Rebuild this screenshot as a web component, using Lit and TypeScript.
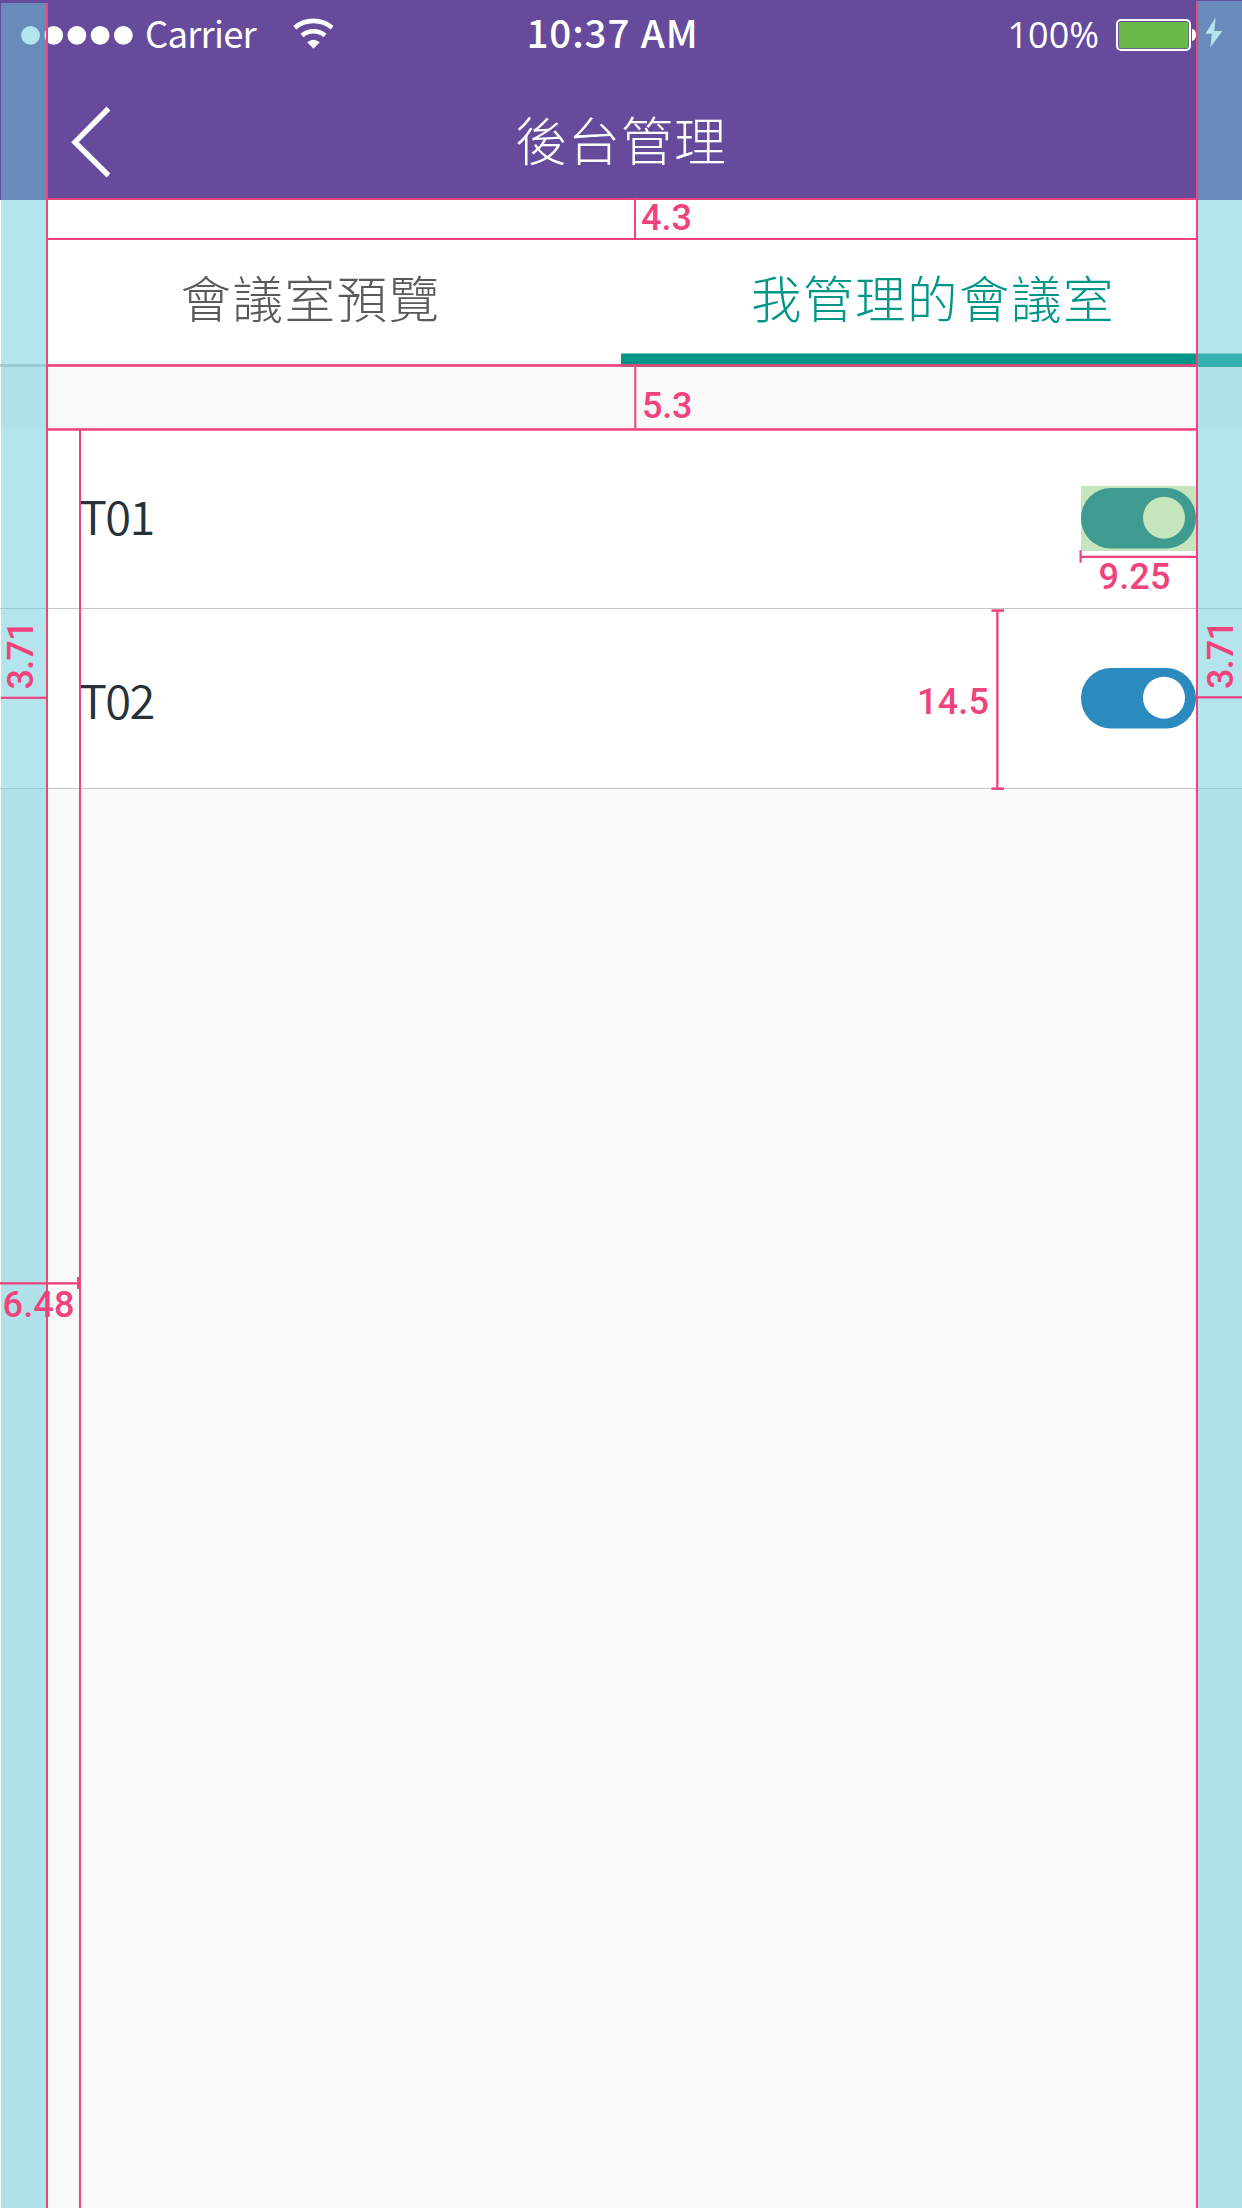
import { LitElement, html, svg, css } from "lit";
import { customElement } from "lit/decorators.js";

interface Room { name: string; measured: boolean; }

const rooms: Room[] = [
  { name: "T01", measured: true },
  { name: "T02", measured: false },
];

// Redline bars: x, y, width, height
const bars: [number, number, number, number][] = [
  [46, 3, 2, 2205],
  [1196, 1, 2, 2207],
  [79, 430, 2, 1778],
  [48, 198, 1148, 2],
  [48, 238, 1148, 2],
  [48, 364.2, 1148, 2.5],
  [48, 428.2, 1149, 2.5],
  [634, 197.5, 2, 41],
  [634.3, 363.5, 2, 65],
  [1079.5, 550.2, 2.2, 12.5],
  [1081, 555.7, 115, 2.3],
  [996.2, 610, 2.3, 179],
  [991.5, 609.3, 12.5, 2.5],
  [991.5, 787.4, 12.5, 2.5],
  [1, 696.7, 45, 2.2],
  [1198, 696.2, 44, 2.2],
  [0, 1282.2, 78, 2.3],
  [77, 1277, 2.2, 12],
];

// Redline labels: text, x, baseline y, drawn length, rotated
const labels: [string, number, number, number, boolean][] = [
  ["4.3", 641, 229.5, 51, false],
  ["5.3", 642, 417.7, 50.5, false],
  ["9.25", 1098.5, 588.7, 72, false],
  ["14.5", 917, 713.5, 72, false],
  ["6.48", 2.5, 1316.8, 72, false],
  ["3.71", 33.2, 689.5, 69, true],
  ["3.71", 1232.6, 689, 69, true],
];

@customElement("app-root")
export class AppRoot extends LitElement {
  static styles = css`
    :host {
      display: block;
      position: relative;
      width: 1242px;
      height: 2208px;
      overflow: hidden;
      background: #f9f9f9;
      font-family: "Noto Sans CJK TC", "Noto Sans", sans-serif;
    }
    .top { height: 200px; background: #664a9c; color: #fff; display: flex; flex-direction: column; }
    .status { height: 69px; display: grid; grid-template-columns: 1fr auto 1fr; align-items: center; }
    .left, .right { display: flex; align-items: center; }
    .left { padding-left: 21px; }
    .right { justify-content: flex-end; padding-right: 19px; }
    .dots { width: 113px; height: 20px; flex: none; }
    .carrier { font-size: 36.5px; line-height: 50px; letter-spacing: -0.8px; margin: 0 0 3px 11px; width: 148px; white-space: nowrap; }
    .wifi { width: 40px; height: 32px; flex: none; margin-bottom: 2px; }
    .time { font-size: 38.5px; line-height: 50px; font-weight: 500; letter-spacing: 0.9px; word-spacing: 1px; white-space: pre; margin: 0 17px 7px 0; }
    .pct { font-family: "Open Sans", "Noto Sans", sans-serif; font-size: 36px; line-height: 50px; letter-spacing: 0; margin-right: 16px; }
    .battery { width: 108px; height: 34px; flex: none; }
    .nav { flex: 1; display: grid; grid-template-columns: 121px 1fr 121px; align-items: center; }
    .back { width: 50px; height: 76px; margin: 15px 0 0 65px; }
    .title { text-align: center; font-size: 52px; line-height: 70px; font-weight: 300; letter-spacing: 0.9px; margin-top: 8px; }
    .tabs { height: 164px; background: #fff; display: grid; grid-template-columns: 1fr 1fr; border-bottom: 3px solid #ccc; }
    .tab { display: flex; justify-content: center; padding-top: 61px; font-size: 50.5px; line-height: 70px; font-weight: 300; letter-spacing: 1.5px; color: #5a5a5a; }
    .tab.active { color: #009688; padding-left: 3px; box-shadow: inset 0 -10.5px 0 #009688, 0 3px 0 #009688; }
    .rooms { margin-top: 62px; background: #fff; }
    .room { height: 180px; box-sizing: border-box; display: flex; align-items: center; justify-content: space-between; padding: 0 45px 0 79px; border-bottom: 1px solid #c6c6c6; }
    .room + .room { height: 180px; }
    .name { font-size: 47px; line-height: 70px; color: #263238; font-weight: 350; letter-spacing: -1.6px; margin-top: -7px; }
    .room + .room .name { margin-top: 1px; }
    .plate { width: 116px; height: 65px; display: flex; align-items: center; }
    .plate.measured { background: #c5e6bc; }
    .toggle { width: 115px; height: 61px; display: block; }
    .track { fill: #2c8bbe; }
    .knob { fill: #fff; }
    .measured .track { fill: #3f9a90; }
    .measured .knob { fill: #c5e6bc; }
    .redlines { position: absolute; left: 0; top: 0; width: 1242px; height: 2208px; }
    .margin { fill: #6bcbd9; fill-opacity: 0.5; }
    .bar { fill: #f0437e; }
    .label { fill: #f0437e; font-family: Roboto, sans-serif; font-size: 36px; font-weight: 500; }
  `;

  private renderRoom(room: Room) {
    return html`
      <div class="room">
        <span class="name">${room.name}</span>
        <span class="plate ${room.measured ? "measured" : ""}">
          <svg class="toggle" viewBox="0 0 115 61">
            <rect class="track" width="115" height="60.5" rx="30"></rect>
            <circle class="knob" cx="83" cy="29.7" r="21"></circle>
          </svg>
        </span>
      </div>`;
  }

  render() {
    return html`
      <header class="top">
        <div class="status">
          <div class="left">
            <svg class="dots" viewBox="21 24.5 113 20" fill="#fff">
              ${[30.5, 53.7, 76.9, 100.1, 123.3].map((x) => svg`<circle cx=${x} cy="34.8" r="9.4"></circle>`)}
            </svg>
            <span class="carrier">Carrier</span>
            <svg class="wifi" viewBox="0 0 40 32" fill="none" stroke="#fff" stroke-width="4.6">
              <path d="M1.8 9.7C12.5 .6 28.5 .6 39.2 9.7"></path>
              <path d="M9 17.5C15.5 11.8 25.5 11.8 32 17.5"></path>
              <path d="M14.2 24.2Q20.5 19.2 26.8 24.2L20.5 30.8Z" fill="#fff" stroke="none"></path>
            </svg>
          </div>
          <span class="time">10:37 AM</span>
          <div class="right">
            <span class="pct">100%</span>
            <svg class="battery" viewBox="1115 18 108 34">
              <rect x="1117" y="20" width="73" height="30" rx="4" fill="none" stroke="#fff" stroke-width="2"></rect>
              <rect x="1119" y="22" width="69.3" height="26.3" rx="1.5" fill="#6bba47"></rect>
              <path d="M1192 29Q1196 29.5 1196 34.8T1192 41Z" fill="#fff"></path>
              <path d="M1215.7 17.3L1205.5 33.8H1211.8L1210.3 47.5L1222.3 31H1214.3Z" fill="#fff"></path>
            </svg>
          </div>
        </div>
        <div class="nav">
          <svg class="back" viewBox="65 104 50 76" fill="none" stroke="#fff" stroke-width="5.4">
            <path d="M108.5 108.5L75 142.2L108.5 175.5"></path>
          </svg>
          <span class="title">後台管理</span>
        </div>
      </header>
      <nav class="tabs">
        <div class="tab">會議室預覽</div>
        <div class="tab active">我管理的會議室</div>
      </nav>
      <main class="rooms">${rooms.map((r) => this.renderRoom(r))}</main>
      <svg class="redlines" viewBox="0 0 1242 2208">
        <rect class="margin" x="1" y="3" width="45" height="2205"></rect>
        <rect class="margin" x="1198" y="1" width="44" height="2207"></rect>
        ${bars.map(([x, y, w, h]) => svg`<rect class="bar" x=${x} y=${y} width=${w} height=${h}></rect>`)}
        ${labels.map(([t, x, y, len, turned]) => svg`<text class="label" textLength=${len}
          transform=${`translate(${x} ${y})${turned ? " rotate(-90)" : ""}`}>${t}</text>`)}
      </svg>`;
  }
}
